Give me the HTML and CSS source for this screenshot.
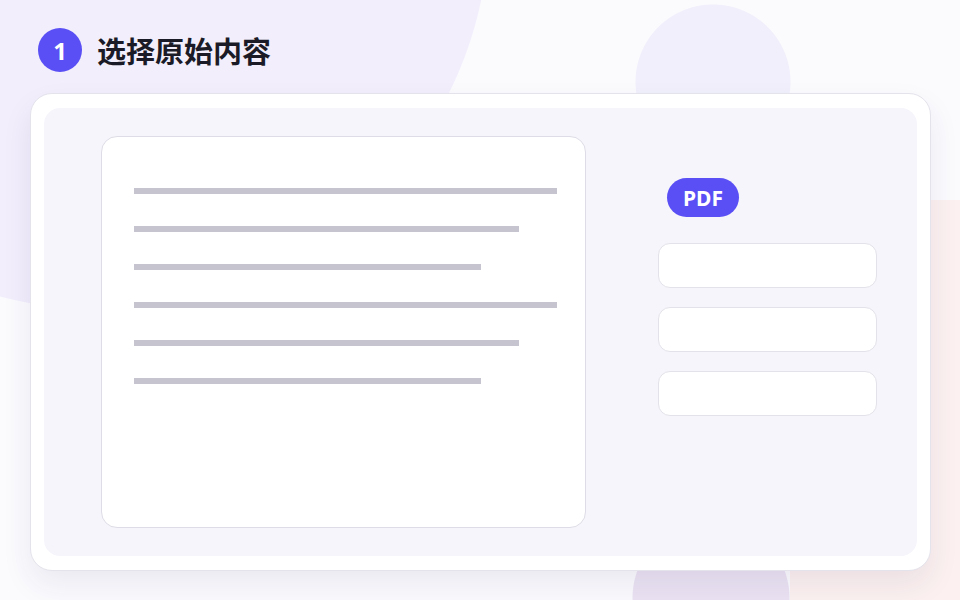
FILE: index.html
```html
<!DOCTYPE html>
<html>
<head>
	<title>选择原始内容</title>
	<link rel="stylesheet" href="styles.css">
</head>
<body>
	<div class="page">
		<h1 class="step">
			<span class="step__num">1</span>
			<span class="step__title">选择原始内容</span>
		</h1>

		<div class="card">
			<div class="panel">
				<div class="doc">
					<div class="doc__line"></div>
					<div class="doc__line doc__line--mid"></div>
					<div class="doc__line doc__line--short"></div>
					<div class="doc__line"></div>
					<div class="doc__line doc__line--mid"></div>
					<div class="doc__line doc__line--short"></div>
				</div>
				<div class="side">
					<span class="badge">PDF</span>
					<div class="field"></div>
					<div class="field"></div>
					<div class="field"></div>
				</div>
			</div>
		</div>
	</div>
</body>
</html>
```

FILE: styles.css
```css
html,
body {
	margin: 0;
	height: 100%;
}

/* background shapes are drawn as gradient layers */
body {
	font-family: "Noto Sans", "Noto Sans CJK SC", sans-serif;
	overflow: hidden;
	background:
		radial-gradient(circle 390px at 100px -80px, #f2eefc 389px, transparent 390px),
		radial-gradient(circle 78px at 713px 82px, #f0effb 77px, transparent 78px),
		radial-gradient(circle 79px at 711px 598px, #ebe3f3 78px, transparent 79px),
		linear-gradient(#fcf1f0, #fcf1f0) 790px 200px / 170px 400px no-repeat,
		#fbfbfe;
}

.page {
	padding: 28px 0 0 30px;
}

.step {
	display: flex;
	align-items: center;
	gap: 15px;
	margin: 0 0 21px 8px;
	height: 44px;
}

.step__num {
	width: 44px;
	height: 44px;
	border-radius: 50%;
	background-color: #5a4ff5;
	color: #fff;
	font-size: 24px;
	font-weight: 700;
	display: flex;
	align-items: center;
	justify-content: center;
}

.step__title {
	font-family: "Noto Sans CJK SC", sans-serif;
	font-size: 29px;
	font-weight: 700;
	color: #1b1a27;
}

.card {
	box-sizing: border-box;
	width: 901px;
	height: 478px;
	padding: 14px 13px;
	background-color: #fff;
	border: 1px solid #e4e3ec;
	border-radius: 22px;
	box-shadow: 0 14px 30px rgba(40, 30, 90, 0.08);
}

.panel {
	display: flex;
	gap: 72px;
	height: 100%;
	padding: 28px 0 0 57px;
	box-sizing: border-box;
	background-color: #f6f5fb;
	border-radius: 16px;
}

.doc {
	box-sizing: border-box;
	width: 485px;
	height: 392px;
	padding: 51px 0 0 32px;
	background-color: #fff;
	border: 1.5px solid #dedde7;
	border-radius: 16px;
	display: flex;
	flex-direction: column;
	gap: 32px;
}

.doc__line {
	width: 423px;
	height: 6px;
	background-color: #c6c5cf;
}

.doc__line--mid {
	width: 385px;
}

.doc__line--short {
	width: 347px;
}

.side {
	display: flex;
	flex-direction: column;
	align-items: flex-start;
	padding-top: 42px;
	gap: 19px;
}

.badge {
	box-sizing: border-box;
	width: 72px;
	height: 39px;
	margin: 0 0 7px 9px;
	border-radius: 20px;
	background-color: #5a4ff5;
	color: #fff;
	font-size: 21px;
	font-weight: 700;
	display: flex;
	align-items: center;
	justify-content: center;
}

.field {
	box-sizing: border-box;
	width: 219px;
	height: 45px;
	background-color: #fff;
	border: 1px solid #e3e2ea;
	border-radius: 12px;
}
```
